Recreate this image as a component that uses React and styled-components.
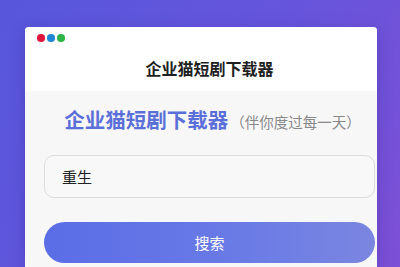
import React from "react";
import styled, { createGlobalStyle } from "styled-components";

const Global = createGlobalStyle`
  html, body { margin: 0; padding: 0; }
  body {
    width: 400px;
    height: 267px;
    overflow: hidden;
    font-family: "Noto Sans CJK SC", "Noto Sans", sans-serif;
    background: linear-gradient(120deg, #5757dc 0%, #6655dc 55%, #7d50d6 100%);
  }
`;

const Page = styled.div`
  padding: 27px 23px 0 25px;
`;

const Card = styled.div`
  background: #f7f7f8;
  border-radius: 4px 4px 0 0;
  height: 240px;
  box-shadow: 0 4px 16px rgba(40, 20, 120, 0.25);
  overflow: hidden;
`;

const Header = styled.div`
  background: #ffffff;
  height: 64px;
  padding: 7px 11px 0 12px;
  box-sizing: border-box;
  display: flex;
  flex-direction: column;
`;

const Dots = styled.div`
  display: flex;
  gap: 2.5px;
`;

const Dot = styled.span`
  width: 7.5px;
  height: 7.5px;
  border-radius: 50%;
  background: ${(p) => p.$c};
`;

const HeaderTitle = styled.div`
  margin-top: 16px;
  padding-left: 16px;
  text-align: center;
  font-size: 16px;
  font-weight: 700;
  color: #1f1f1f;
  line-height: 20px;
`;

const Content = styled.div`
  padding: 14px 2px 0 19px;
  display: flex;
  flex-direction: column;
`;

const Heading = styled.div`
  display: flex;
  align-items: baseline;
  justify-content: center;
  padding-left: 6px;
  height: 28px;
`;

const HeadMain = styled.span`
  font-size: 20.5px;
  font-weight: 700;
  color: #5a6fd8;
  line-height: 28px;
`;

const HeadSub = styled.span`
  font-size: 14.5px;
  color: #888888;
  margin-left: 2px;
`;

const Input = styled.div`
  margin-top: 22px;
  height: 43px;
  box-sizing: border-box;
  border: 1px solid #dcdcdc;
  border-radius: 10px;
  background: #f8f8f9;
  display: flex;
  align-items: center;
  padding-left: 17px;
  font-size: 15px;
  color: #222;
`;

const Button = styled.div`
  margin-top: 24px;
  height: 41px;
  border-radius: 21px;
  background: linear-gradient(90deg, #5a6de6 0%, #6a7be6 60%, #7b86e0 100%);
  color: #ffffff;
  font-size: 15px;
  display: flex;
  align-items: center;
  justify-content: center;
`;

export default function App() {
  return (
    <>
      <Global />
      <Page>
        <Card>
          <Header>
            <Dots>
              <Dot $c="#e0163e" />
              <Dot $c="#1f86d6" />
              <Dot $c="#2fb447" />
            </Dots>
            <HeaderTitle>企业猫短剧下载器</HeaderTitle>
          </Header>
          <Content>
            <Heading>
              <HeadMain>企业猫短剧下载器</HeadMain>
              <HeadSub>（伴你度过每一天）</HeadSub>
            </Heading>
            <Input>重生</Input>
            <Button>搜索</Button>
          </Content>
        </Card>
      </Page>
    </>
  );
}
